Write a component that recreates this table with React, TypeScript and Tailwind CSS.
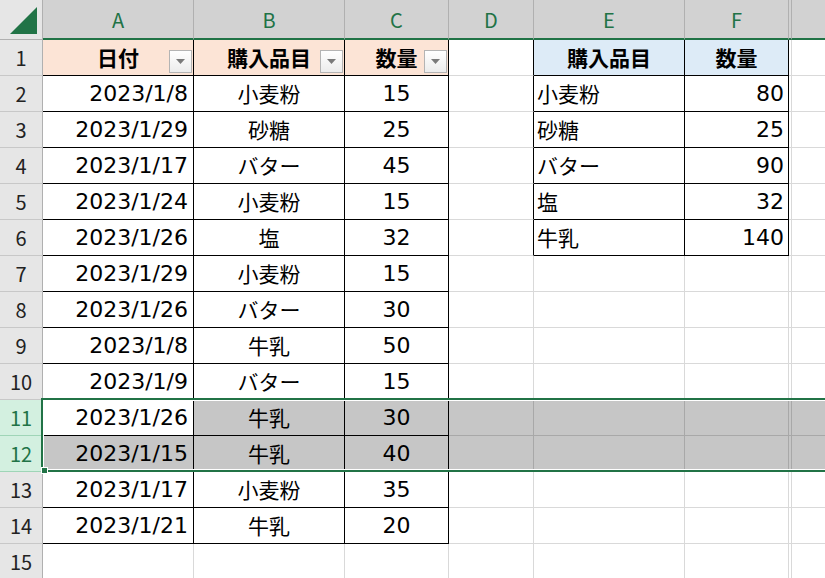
import React from "react";

type Col = "A" | "B" | "C" | "D" | "E" | "F" | "G" | "H";

const cols: { key: Col; w: string }[] = [
  { key: "A", w: "w-[151px]" },
  { key: "B", w: "w-[151px]" },
  { key: "C", w: "w-[104px]" },
  { key: "D", w: "w-[85px]" },
  { key: "E", w: "w-[151px]" },
  { key: "F", w: "w-[104px]" },
  { key: "G", w: "w-[3px]" },
  { key: "H", w: "w-[85px]" },
];

const purchases: [string, string, string][] = [
  ["2023/1/8", "小麦粉", "15"],
  ["2023/1/29", "砂糖", "25"],
  ["2023/1/17", "バター", "45"],
  ["2023/1/24", "小麦粉", "15"],
  ["2023/1/26", "塩", "32"],
  ["2023/1/29", "小麦粉", "15"],
  ["2023/1/26", "バター", "30"],
  ["2023/1/8", "牛乳", "50"],
  ["2023/1/9", "バター", "15"],
  ["2023/1/26", "牛乳", "30"],
  ["2023/1/15", "牛乳", "40"],
  ["2023/1/17", "小麦粉", "35"],
  ["2023/1/21", "牛乳", "20"],
];

const totals: [string, string][] = [
  ["小麦粉", "80"],
  ["砂糖", "25"],
  ["バター", "90"],
  ["塩", "32"],
  ["牛乳", "140"],
];

const headers: Partial<Record<Col, string>> = {
  A: "日付",
  B: "購入品目",
  C: "数量",
  E: "購入品目",
  F: "数量",
};

function valueOf(r: number, c: Col): string {
  if (r === 1) return headers[c] ?? "";
  if (r <= 14 && (c === "A" || c === "B" || c === "C")) {
    const row = purchases[r - 2];
    return c === "A" ? row[0] : c === "B" ? row[1] : row[2];
  }
  if (r <= 6 && (c === "E" || c === "F")) {
    const row = totals[r - 2];
    return c === "E" ? row[0] : row[1];
  }
  return "";
}

function FilterButton() {
  return (
    <span className="absolute bottom-[2px] right-[1px] flex h-[23px] w-[23px] items-center justify-center border border-[#b4b4b4] bg-gradient-to-b from-white to-[#ececec]">
      <svg width="9" height="5" viewBox="0 0 9 5" aria-hidden="true">
        <path d="M0 0h9L4.5 5z" fill="#7a7a7a" />
      </svg>
    </span>
  );
}

function Cell({ r, c, w }: { r: number; c: Col; w: string }) {
  const inLeft = r <= 14 && (c === "A" || c === "B" || c === "C");
  const inRight = r <= 6 && (c === "E" || c === "F");
  const sel = r === 11 || r === 12;
  const active = r === 11 && c === "A";

  let bg = "bg-white";
  if (r === 1 && inLeft) bg = "bg-[#fce4d6]";
  else if (r === 1 && inRight) bg = "bg-[#ddebf7]";
  else if (sel && !active) bg = "bg-[#c6c6c6]";

  const blackRight = inLeft || inRight || (c === "D" && r <= 6);
  const br = blackRight ? "border-r-black" : sel ? "border-r-[#a8a8a8]" : "border-r-[#d9d9d9]";
  const bb = inLeft || inRight ? "border-b-black" : sel ? "border-b-[#a8a8a8]" : "border-b-[#d9d9d9]";

  let align = "justify-center";
  if (r > 1) {
    if (c === "A") align = "justify-end pr-[5px]";
    if (c === "E") align = "justify-start pl-[3px]";
    if (c === "F") align = "justify-end pr-[4px]";
  }

  // numbers are set in a wider latin face, item names in the CJK face
  const numeric = r > 1 && (c === "A" || c === "C" || c === "F");
  const font = r === 1
    ? "font-bold"
    : numeric
      ? "font-['DejaVu_Sans',sans-serif] text-[22px]"
      : "";

  const text = valueOf(r, c);
  const filter = r === 1 && inLeft;

  return (
    <div className={`relative flex h-full shrink-0 items-center border-r border-b ${w} ${bg} ${br} ${bb} ${align}`}>
      <span className={font}>{text}</span>
      {filter && <FilterButton />}
    </div>
  );
}

export default function App() {
  const rows = Array.from({ length: 15 }, (_, i) => i + 1);

  return (
    <div className="relative h-[578px] w-[825px] overflow-hidden bg-white font-['Noto_Sans_CJK_JP',sans-serif] text-[21px] leading-none text-black">
      {/* column headers */}
      <div className="flex h-[40px]">
        <div className="flex w-[43px] shrink-0 items-end justify-end border-r border-b border-r-[#b0b0b0] border-b-[#b0b0b0] bg-[#e6e6e6] pb-[4px] pr-[4px]">
          <svg width="28" height="28" viewBox="0 0 28 28" aria-hidden="true">
            <path d="M0 27H27V0z" fill="#217346" />
          </svg>
        </div>
        {cols.map((c) => (
          <div
            key={c.key}
            className={`flex shrink-0 items-center justify-center overflow-hidden border-r border-r-[#b0b0b0] border-b-2 border-b-[#217346] bg-[#d2d2d2] pt-[1px] text-[20px] text-[#217346] ${c.w}`}
          >
            {/* G is almost hidden and H's letter sits past the window edge */}
            {c.key === "G" || c.key === "H" ? "" : c.key}
          </div>
        ))}
      </div>

      {/* rows */}
      {rows.map((r) => {
        const sel = r === 11 || r === 12;
        return (
          <div key={r} className="flex h-[36px]">
            <div
              className={`flex w-[43px] shrink-0 items-center justify-center border-r border-b text-[20px] ${
                sel
                  ? "border-r-[#217346] border-b-[#9fd5b7] bg-[#d3f0e0] text-[#217346]"
                  : "border-r-[#b0b0b0] border-b-[#c8c8c8] bg-[#e6e6e6] text-[#222]"
              }`}
            >
              {r}
            </div>
            {cols.map((c) => (
              <Cell key={c.key} r={r} c={c.key} w={c.w} />
            ))}
          </div>
        );
      })}

      {/* selection of rows 11-12 */}
      <div className="pointer-events-none absolute left-[41px] right-[-4px] top-[398px] h-[74px] border-2 border-[#217346] shadow-[inset_0_0_0_1px_white]" />
      <div className="absolute left-[41px] top-[467px] h-[7px] w-[7px] border border-white bg-[#217346]" />
    </div>
  );
}
